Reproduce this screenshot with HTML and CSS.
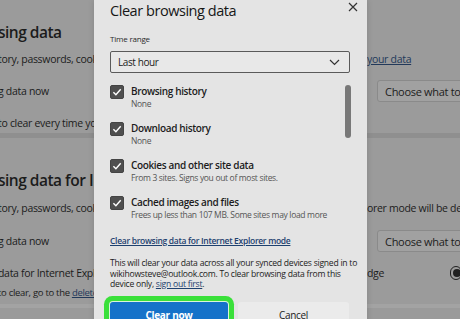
FILE: index.html
```html
<!DOCTYPE html>
<html lang="en">
<head>
    <meta charset="UTF-8">
    <meta name="viewport" content="width=device-width, initial-scale=1.0">
    <title>Clear browsing data</title>
    <link rel="stylesheet" href="styles.css">
</head>
<body>
    <div class="settings">
        <section class="card card-top">
            <div class="row heading"><span class="left">sing data</span></div>
            <div class="row"><span class="left">tory, passwords, cookies and more</span><span class="right"><a class="bg-link">your data</a></span></div>
            <div class="row row-btn"><span class="left">g data now</span><span class="right"><span class="bg-btn">Choose what to clear</span></span></div>
            <div class="row"><span class="left">to clear every time you close the browser</span></div>
        </section>

        <section class="card card-ie">
            <div class="row heading"><span class="left">sing data for Internet Explorer</span></div>
            <div class="row row-tall"><span class="left">tory, passwords, cookies and more</span><span class="right">orer mode will be deleted</span></div>
            <div class="row row-btn"><span class="left">g data now</span><span class="right"><span class="bg-btn">Choose what to clear</span></span></div>
            <div class="row row-toggle"><span class="left">data for Internet Explorer</span><span class="right toggle-cell">dge <span class="toggle"><span class="knob"></span></span></span></div>
            <div class="row row-small"><span class="left small">to clear, go to the <a class="bg-link">delete browsing</a></span></div>
        </section>
    </div>

    <div class="dialog">
        <span class="close-x">
            <svg width="10" height="10" viewBox="0 0 10 10"><path d="M1 1 L9 9 M9 1 L1 9" stroke="#333" stroke-width="1.2" fill="none"/></svg>
        </span>

        <h1 class="dialog-title">Clear browsing data</h1>

        <div class="field-label">Time range</div>
        <div class="select">
            <span>Last hour</span>
            <svg width="11" height="7" viewBox="0 0 11 7"><path d="M1 1 L5.5 5.5 L10 1" stroke="#333" stroke-width="1.2" fill="none"/></svg>
        </div>

        <div class="list-area">
            <div class="items">
                <div class="item">
                    <span class="check"><svg width="14" height="14" viewBox="0 0 14 14"><rect x="0.5" y="0.5" width="13" height="13" rx="1.5" fill="#4f4f4f" stroke="#444"/><path d="M3.4 7.3 L5.9 9.8 L10.7 4.3" stroke="#fff" stroke-width="1.4" fill="none"/></svg></span>
                    <div class="item-text">
                        <div class="item-title">Browsing history</div>
                        <div class="item-desc">None</div>
                    </div>
                </div>
                <div class="item">
                    <span class="check"><svg width="14" height="14" viewBox="0 0 14 14"><rect x="0.5" y="0.5" width="13" height="13" rx="1.5" fill="#4f4f4f" stroke="#444"/><path d="M3.4 7.3 L5.9 9.8 L10.7 4.3" stroke="#fff" stroke-width="1.4" fill="none"/></svg></span>
                    <div class="item-text">
                        <div class="item-title">Download history</div>
                        <div class="item-desc">None</div>
                    </div>
                </div>
                <div class="item">
                    <span class="check"><svg width="14" height="14" viewBox="0 0 14 14"><rect x="0.5" y="0.5" width="13" height="13" rx="1.5" fill="#4f4f4f" stroke="#444"/><path d="M3.4 7.3 L5.9 9.8 L10.7 4.3" stroke="#fff" stroke-width="1.4" fill="none"/></svg></span>
                    <div class="item-text">
                        <div class="item-title">Cookies and other site data</div>
                        <div class="item-desc">From 3 sites. Signs you out of most sites.</div>
                    </div>
                </div>
                <div class="item">
                    <span class="check"><svg width="14" height="14" viewBox="0 0 14 14"><rect x="0.5" y="0.5" width="13" height="13" rx="1.5" fill="#4f4f4f" stroke="#444"/><path d="M3.4 7.3 L5.9 9.8 L10.7 4.3" stroke="#fff" stroke-width="1.4" fill="none"/></svg></span>
                    <div class="item-text">
                        <div class="item-title">Cached images and files</div>
                        <div class="item-desc">Frees up less than 107 MB. Some sites may load more</div>
                    </div>
                </div>
            </div>
            <div class="scrollbar"></div>
        </div>

        <a class="ie-link">Clear browsing data for Internet Explorer mode</a>

        <p class="sync-note">This will clear your data across all your synced devices signed in to<br>wikihowsteve@outlook.com. To clear browsing data from this<br>device only, <a class="inline-link">sign out first</a>.</p>

        <div class="actions">
            <button class="btn-primary">Clear now</button>
            <button class="btn-cancel">Cancel</button>
        </div>
    </div>
</body>
</html>
```

FILE: styles.css
```css
* {
    margin: 0;
    padding: 0;
    box-sizing: border-box;
}

body {
    font-family: 'Open Sans', 'Noto Sans', sans-serif;
    background: #9a9a9a;
    color: #1c1c1c;
    width: 460px;
    height: 319px;
    overflow: hidden;
    position: relative;
}

/* settings page behind the overlay */
.card {
    background: #9b9b9b;
}

.card-top {
    height: 138px;
    padding-top: 20px;
    border-bottom: 5px solid #8f8f8f;
}

.card-ie {
    height: 170px;
    padding-top: 30px;
    border-bottom: 4px solid #a3a3a3;
}

.row {
    display: grid;
    grid-template-columns: 367px 1fr;
    align-items: center;
    height: 30px;
    font-size: 10.5px;
    letter-spacing: -0.3px;
    white-space: nowrap;
}

.row.heading {
    height: 24px;
    font-size: 15.5px;
    font-weight: 600;
    letter-spacing: -0.5px;
}

.row-btn {
    height: 34px;
}

.row-tall {
    height: 32px;
}

.row-toggle {
    height: 29px;
}

.row-small {
    height: 10px;
}

.left {
    overflow: hidden;
    margin-left: -2px;
}

.small {
    font-size: 9.5px;
}

.right {
    overflow: hidden;
}

.bg-link {
    color: #22395a;
    text-decoration: underline;
}

.bg-btn {
    display: inline-block;
    margin-left: 10px;
    padding: 3px 7px;
    height: 22px;
    width: 120px;
    background: #a1a1a1;
    border: 1px solid #8a8a8a;
    border-radius: 3px;
    font-size: 11px;
    line-height: 15px;
}

.toggle-cell {
    display: flex;
    align-items: center;
}

.toggle {
    display: inline-flex;
    align-items: center;
    margin-left: 66px;
    width: 30px;
    height: 14px;
    border: 1.5px solid #202020;
    border-radius: 8px;
    padding-left: 2px;
}

.knob {
    width: 8px;
    height: 8px;
    border-radius: 50%;
    background: #202020;
}

/* dialog */
.dialog {
    position: absolute;
    left: 94px;
    top: 0;
    width: 273px;
    height: 330px;
    background: #e4e4e4;
    padding: 0 17px 0 16px;
    box-shadow: 0 0 6px rgba(0, 0, 0, 0.15);
}

.close-x {
    position: absolute;
    top: -5px;
    left: 254px;
}

.dialog-title {
    font-size: 14.5px;
    font-weight: 400;
    line-height: 20px;
    margin-top: 1px;
    letter-spacing: -0.45px;
    color: #161616;
}

.field-label {
    font-size: 8px;
    line-height: 12px;
    margin-top: 12px;
    color: #2a2a2a;
    letter-spacing: -0.2px;
}

.select {
    margin-top: 6px;
    height: 22px;
    border: 1px solid #5a5a5a;
    border-radius: 2px;
    background: #e8e8e8;
    display: flex;
    align-items: center;
    justify-content: space-between;
    padding: 0 9px 0 7px;
    font-size: 10px;
    letter-spacing: -0.4px;
}

.list-area {
    display: flex;
    justify-content: space-between;
    margin-top: 12px;
}

.items {
    display: flex;
    flex-direction: column;
    gap: 12px;
}

.item {
    display: flex;
    gap: 7px;
    height: 25px;
}

.check {
    width: 14px;
    height: 14px;
    display: block;
}

.check svg {
    display: block;
}

.item-title {
    font-size: 10px;
    line-height: 13px;
    font-weight: 600;
    letter-spacing: -0.35px;
    color: #1c1c1c;
}

.item-desc {
    font-size: 8.5px;
    line-height: 12px;
    color: #555;
    letter-spacing: -0.33px;
}

.scrollbar {
    width: 6px;
    height: 53px;
    border-radius: 3px;
    background: #787878;
    margin-right: -1px;
}

.ie-link {
    display: block;
    margin-top: 14px;
    font-size: 8.5px;
    line-height: 12px;
    font-weight: 600;
    color: #1e416f;
    text-decoration: underline;
    letter-spacing: -0.3px;
}

.sync-note {
    margin-top: 11px;
    font-size: 8.6px;
    line-height: 10.5px;
    color: #222;
    letter-spacing: -0.25px;
    white-space: nowrap;
}

.inline-link {
    color: #1e416f;
    text-decoration: underline;
}

.actions {
    display: flex;
    gap: 10px;
    margin-top: 12px;
}

.actions button {
    font-family: inherit;
    height: 26px;
    border: none;
    border-radius: 3px;
    font-size: 10px;
    letter-spacing: -0.3px;
}

.btn-primary {
    width: 118px;
    background: #1572c9;
    color: #fff;
    font-weight: 700;
    box-shadow: 0 0 0 1px #d8f5d8, 0 0 0 6px #3ae03a;
}

.btn-cancel {
    width: 111px;
    background: #ebebeb;
    color: #222;
}
```
